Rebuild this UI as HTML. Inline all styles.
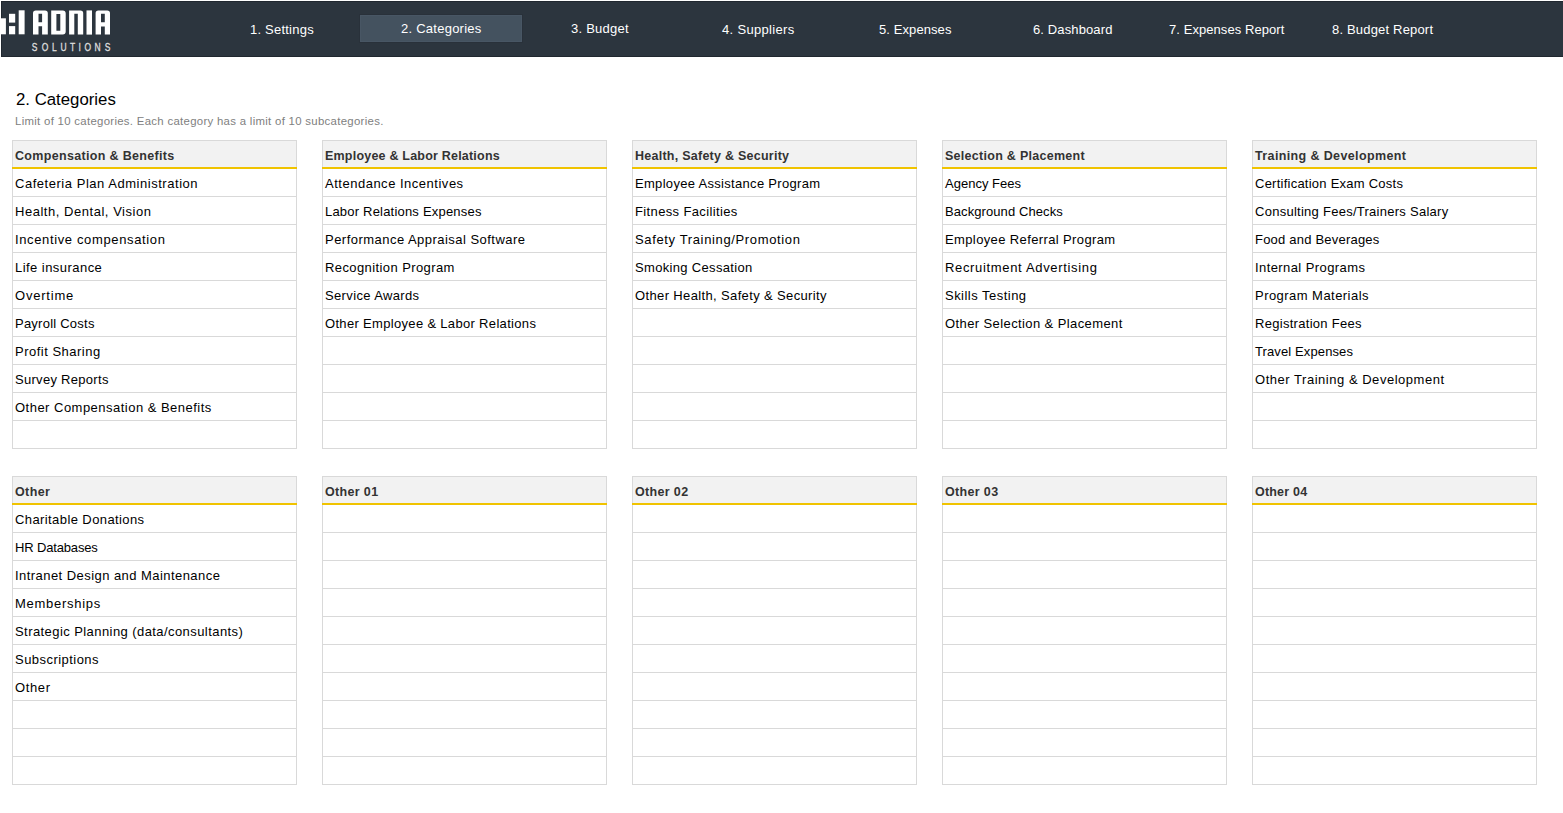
<!DOCTYPE html><html><head><meta charset='utf-8'><style>
*{margin:0;padding:0;box-sizing:border-box}
html,body{width:1563px;height:813px;overflow:hidden;background:#fff}
body{position:relative;font-family:"Liberation Sans",sans-serif}
#hdr{position:absolute;left:1px;top:1px;width:1562px;height:56px;background:#2c353e;border-top:1px solid #20272f;border-bottom:1px solid #20272f;border-left:1px solid #20272f}
.nav{position:absolute;top:21px;font-size:13px;color:#fff;white-space:nowrap;line-height:16px}
#act{position:absolute;left:360px;top:15px;width:162px;height:27px;background:#44525f;box-shadow:inset 0 0 0 1px #485664,0 0 0 1px #29313a}
#title{position:absolute;left:16px;top:90px;font-size:16.8px;color:#000;white-space:nowrap;line-height:20px}
#sub{position:absolute;left:15px;top:114px;font-size:11.4px;letter-spacing:0.3px;color:#808080;white-space:nowrap;line-height:14px}
.t{position:absolute;width:285px;height:309px;border:1px solid #d9d9d9;border-bottom:none}
.h{position:relative;height:28px;background:#f2f2f2;padding-left:2px;font-weight:bold;font-size:12.5px;letter-spacing:0.3px;color:#333;line-height:30px;white-space:nowrap}
.h::after{content:"";position:absolute;left:-1px;right:-1px;bottom:0;height:2px;background:#f0c300}
.r{height:28px;border-bottom:1px solid #d9d9d9;padding-left:2px;font-size:13px;letter-spacing:0.4px;color:#000;line-height:29px;white-space:nowrap}
</style></head><body>
<div id='hdr'></div>
<div id='act'></div>
<svg style="position:absolute;left:0;top:0" width="120" height="57" viewBox="0 0 120 57">
<g fill="#fff" fill-rule="evenodd">
<rect x="0" y="18.3" width="5.9" height="16"/>
<rect x="9" y="13.8" width="6.2" height="8.8"/>
<rect x="9" y="26.1" width="6.2" height="8.2"/>
<rect x="18.7" y="10.3" width="5.9" height="24"/>
<path d="M33,34.6 V13.2 Q33,10.4 35.8,10.4 H45 Q47.8,10.4 47.8,13.2 V34.6 H42.1 V26.3 H38.5 V34.6 Z M38.5,13.8 H42.1 V22.2 H38.5 Z"/>
<path d="M51.2,10.4 H62.7 Q65.7,10.4 65.7,13.4 V31.6 Q65.7,34.6 62.7,34.6 H51.2 Z M56.4,14 H60.3 V30.8 H56.4 Z"/>
<path d="M69.1,34.6 V10.4 H80.4 Q83.2,10.4 83.2,13.2 V34.6 H77.8 V13.8 H74.3 V34.6 Z"/>
<rect x="86.5" y="10.4" width="5.5" height="24.2"/>
<path d="M95.6,34.6 V13.2 Q95.6,10.4 98.4,10.4 H107.2 Q110,10.4 110,13.2 V34.6 H104.8 V26.4 H101 V34.6 Z M101,13.8 H104.8 V22.2 H101 Z"/>
</g>
<text transform="scale(0.75,1)" font-family="Liberation Sans" font-size="11.3" fill="#e0e0e0" stroke="#e0e0e0" stroke-width="0.25" y="51" x="42.4 55.6 69.3 80.8 93.3 104.8 112.8 126.0 139.6">SOLUTIONS</text>
</svg>
<div class='nav' style='left:250px;top:22px;letter-spacing:0.22px'>1. Settings</div>
<div class='nav' style='left:401px;top:21px;letter-spacing:0.25px'>2. Categories</div>
<div class='nav' style='left:571px;top:21px;letter-spacing:0.24px'>3. Budget</div>
<div class='nav' style='left:722px;top:22px;letter-spacing:0.33px'>4. Suppliers</div>
<div class='nav' style='left:879px;top:22px;letter-spacing:0.09px'>5. Expenses</div>
<div class='nav' style='left:1033px;top:22px;letter-spacing:0.12px'>6. Dashboard</div>
<div class='nav' style='left:1169px;top:22px;letter-spacing:0.07px'>7. Expenses Report</div>
<div class='nav' style='left:1332px;top:22px;letter-spacing:0.18px'>8. Budget Report</div>
<div id='title'>2. Categories</div>
<div id='sub'>Limit of 10 categories. Each category has a limit of 10 subcategories.</div>
<div class='t' style='left:12px;top:140px'><div class='h' style='letter-spacing:0.323px'>Compensation &amp; Benefits</div><div class='r' style='letter-spacing:0.532px'>Cafeteria Plan Administration</div><div class='r' style='letter-spacing:0.533px'>Health, Dental, Vision</div><div class='r' style='letter-spacing:0.634px'>Incentive compensation</div><div class='r' style='letter-spacing:0.454px'>Life insurance</div><div class='r' style='letter-spacing:0.786px'>Overtime</div><div class='r' style='letter-spacing:0.234px'>Payroll Costs</div><div class='r' style='letter-spacing:0.493px'>Profit Sharing</div><div class='r' style='letter-spacing:0.292px'>Survey Reports</div><div class='r' style='letter-spacing:0.482px'>Other Compensation &amp; Benefits</div><div class='r'></div></div>
<div class='t' style='left:322px;top:140px'><div class='h' style='letter-spacing:0.208px'>Employee &amp; Labor Relations</div><div class='r' style='letter-spacing:0.51px'>Attendance Incentives</div><div class='r' style='letter-spacing:0.201px'>Labor Relations Expenses</div><div class='r' style='letter-spacing:0.469px'>Performance Appraisal Software</div><div class='r' style='letter-spacing:0.406px'>Recognition Program</div><div class='r' style='letter-spacing:0.361px'>Service Awards</div><div class='r' style='letter-spacing:0.323px'>Other Employee &amp; Labor Relations</div><div class='r'></div><div class='r'></div><div class='r'></div><div class='r'></div></div>
<div class='t' style='left:632px;top:140px'><div class='h' style='letter-spacing:0.253px'>Health, Safety &amp; Security</div><div class='r' style='letter-spacing:0.308px'>Employee Assistance Program</div><div class='r' style='letter-spacing:0.365px'>Fitness Facilities</div><div class='r' style='letter-spacing:0.637px'>Safety Training/Promotion</div><div class='r' style='letter-spacing:0.325px'>Smoking Cessation</div><div class='r' style='letter-spacing:0.363px'>Other Health, Safety &amp; Security</div><div class='r'></div><div class='r'></div><div class='r'></div><div class='r'></div><div class='r'></div></div>
<div class='t' style='left:942px;top:140px'><div class='h' style='letter-spacing:0.28px'>Selection &amp; Placement</div><div class='r' style='letter-spacing:0.01px'>Agency Fees</div><div class='r' style='letter-spacing:0.086px'>Background Checks</div><div class='r' style='letter-spacing:0.378px'>Employee Referral Program</div><div class='r' style='letter-spacing:0.663px'>Recruitment Advertising</div><div class='r' style='letter-spacing:0.477px'>Skills Testing</div><div class='r' style='letter-spacing:0.399px'>Other Selection &amp; Placement</div><div class='r'></div><div class='r'></div><div class='r'></div><div class='r'></div></div>
<div class='t' style='left:1252px;top:140px'><div class='h' style='letter-spacing:0.372px'>Training &amp; Development</div><div class='r' style='letter-spacing:0.244px'>Certification Exam Costs</div><div class='r' style='letter-spacing:0.264px'>Consulting Fees/Trainers Salary</div><div class='r' style='letter-spacing:0.212px'>Food and Beverages</div><div class='r' style='letter-spacing:0.413px'>Internal Programs</div><div class='r' style='letter-spacing:0.456px'>Program Materials</div><div class='r' style='letter-spacing:0.294px'>Registration Fees</div><div class='r' style='letter-spacing:0.114px'>Travel Expenses</div><div class='r' style='letter-spacing:0.526px'>Other Training &amp; Development</div><div class='r'></div><div class='r'></div></div>
<div class='t' style='left:12px;top:476px'><div class='h' style='letter-spacing:0.375px'>Other</div><div class='r' style='letter-spacing:0.406px'>Charitable Donations</div><div class='r' style='letter-spacing:-0.155px'>HR Databases</div><div class='r' style='letter-spacing:0.446px'>Intranet Design and Maintenance</div><div class='r' style='letter-spacing:0.72px'>Memberships</div><div class='r' style='letter-spacing:0.427px'>Strategic Planning (data/consultants)</div><div class='r' style='letter-spacing:0.458px'>Subscriptions</div><div class='r' style='letter-spacing:0.625px'>Other</div><div class='r'></div><div class='r'></div><div class='r'></div></div>
<div class='t' style='left:322px;top:476px'><div class='h' style='letter-spacing:0.342px'>Other 01</div><div class='r'></div><div class='r'></div><div class='r'></div><div class='r'></div><div class='r'></div><div class='r'></div><div class='r'></div><div class='r'></div><div class='r'></div><div class='r'></div></div>
<div class='t' style='left:632px;top:476px'><div class='h' style='letter-spacing:0.342px'>Other 02</div><div class='r'></div><div class='r'></div><div class='r'></div><div class='r'></div><div class='r'></div><div class='r'></div><div class='r'></div><div class='r'></div><div class='r'></div><div class='r'></div></div>
<div class='t' style='left:942px;top:476px'><div class='h' style='letter-spacing:0.342px'>Other 03</div><div class='r'></div><div class='r'></div><div class='r'></div><div class='r'></div><div class='r'></div><div class='r'></div><div class='r'></div><div class='r'></div><div class='r'></div><div class='r'></div></div>
<div class='t' style='left:1252px;top:476px'><div class='h' style='letter-spacing:0.199px'>Other 04</div><div class='r'></div><div class='r'></div><div class='r'></div><div class='r'></div><div class='r'></div><div class='r'></div><div class='r'></div><div class='r'></div><div class='r'></div><div class='r'></div></div>
</body></html>
